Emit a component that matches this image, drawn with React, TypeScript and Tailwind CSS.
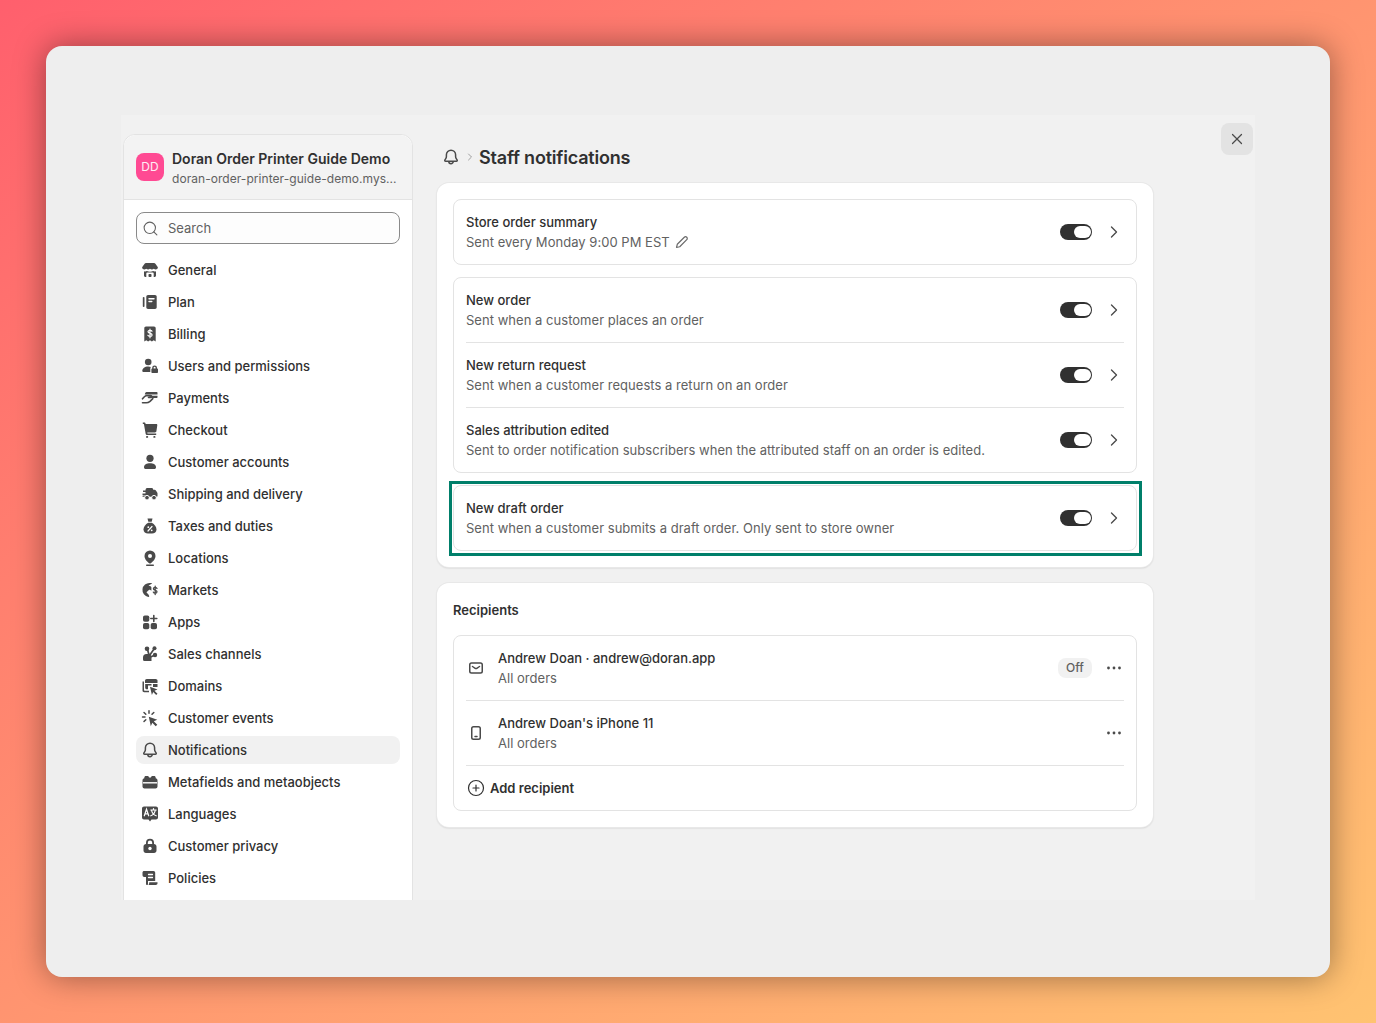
import { ChevronRight, CirclePlus, Search, X } from 'lucide-react'
import type { ReactNode } from 'react'

const Icon = ({ children }: { children: ReactNode }) => (
  <svg viewBox="0 0 20 20" fill="#4a4a4a" className="w-5 h-5 shrink-0">
    {children}
  </svg>
)

const BellIcon = () => (
  <Icon>
    <path
      d="M10 3.200a4.600 4.600 0 0 0-4.600 4.600v1.600c0 .9-.3 1.800-.8 2.500l-.7 1c-.4.600 0 1.300.7 1.300h10.800c.7 0 1.100-.7.7-1.300l-.7-1c-.5-.7-.8-1.600-.8-2.500V7.800A4.600 4.600 0 0 0 10 3.200Z"
      fill="none"
      stroke="#4a4a4a"
      strokeWidth="1.500"
      strokeLinejoin="round"
    />
    <path d="M7.800 14.500a2.200 2.200 0 0 0 4.400 0" fill="none" stroke="#4a4a4a" strokeWidth="1.500" />
  </Icon>
)

const navIcons: Record<string, ReactNode> = {
  General: (
    <Icon>
      <path d="M6 3h8c.6 0 1.100.3 1.400.7l2.300 3.200c.3.500.3 1.100-.1 1.500a2.800 2.800 0 0 1-3.800.3 3 3 0 0 1-3.800 0 3 3 0 0 1-3.800 0 2.800 2.800 0 0 1-3.800-.3c-.4-.4-.4-1-.1-1.500l2.300-3.200C4.900 3.300 5.400 3 6 3Z" />
      <path d="M4 11.200c1 .4 2 .3 2.900-.2 1.900 1 4.300 1 6.200 0 .9.500 1.900.6 2.900.2v4.300c0 .9-.7 1.500-1.500 1.500h-.8v-3.500a1 1 0 0 0-1-1H7.300a1 1 0 0 0-1 1V17h-.8C4.700 17 4 16.400 4 15.500Z" />
      <rect x="8.500" y="14" width="3" height="3" rx=".8" />
    </Icon>
  ),
  Plan: (
    <Icon>
      <rect x="2.800" y="5" width="1.700" height="10" rx=".8" />
      <path d="M8 3h7c1 0 1.700.8 1.700 1.700v10.600c0 1-.7 1.700-1.700 1.700H8c-1 0-1.700-.7-1.700-1.700V4.700C6.300 3.800 7 3 8 3Z" />
      <path d="M9 6.700h5M9 9.500h2.800" stroke="#fff" strokeWidth="1.400" strokeLinecap="round" />
    </Icon>
  ),
  Billing: (
    <Icon>
      <path d="M6 2.500h8c1 0 1.700.8 1.700 1.700v13.300l-2-1.300-1.800 1.300-1.900-1.300-1.900 1.300-1.800-1.300-2 1.300V4.200c0-.9.700-1.700 1.700-1.700Z" />
      <path d="M12 7.300c-.3-.7-1-1-2-1-1.100 0-2 .5-2 1.500 0 2.200 4.100 1 4.100 3.100 0 1-.9 1.500-2.100 1.500-1 0-1.800-.4-2.100-1.100M10 5v8.800" fill="none" stroke="#fff" strokeWidth="1.200" strokeLinecap="round" />
    </Icon>
  ),
  'Users and permissions': (
    <Icon>
      <circle cx="8.200" cy="6" r="3.300" />
      <path d="M2.300 15c0-2.800 2.500-4.600 5.900-4.600 1 0 1.900.2 2.700.5a3 3 0 0 0-.6 1.800v3.300H3.800c-.8 0-1.500-.3-1.500-1Z" />
      <path d="M12.200 12.500v-.7a2.400 2.400 0 0 1 4.800 0v.7h.2c.5 0 .8.400.8.800v3c0 .4-.3.700-.8.700h-5c-.5 0-.8-.3-.8-.7v-3c0-.4.300-.8.800-.8Zm1.400 0h2v-.7a1 1 0 0 0-2 0Z" fillRule="evenodd" />
    </Icon>
  ),
  Payments: (
    <Icon>
      <path d="M6.500 4h10.300c.5 0 .7.300.7.700V6.500H4.800c.2-1.500.8-2.500 1.700-2.500ZM8 7.800h9.500v1.400c0 .5-.2.800-.7.800h-4.300Z" />
      <path d="M2.500 10.800c1-1.300 2.300-2.800 3.800-3.200h4.500c1 0 1.200 1.700 0 1.900H8.500M2.500 14.800h3.700c1.500 0 2.800-.6 3.800-1.500l2.800-2.700" fill="none" stroke="#4a4a4a" strokeWidth="1.600" strokeLinecap="round" strokeLinejoin="round" />
    </Icon>
  ),
  Checkout: (
    <Icon>
      <path d="M2.800 2.500h1.500c.6 0 1.100.4 1.200 1l.1.500h10.700c.6 0 1.100.6 1 1.200l-.9 6.100c-.1.700-.7 1.200-1.400 1.200H7.300l.2 1h8.700v1.400H6.900c-.6 0-1-.4-1.200-1L3.900 4H2.800Z" />
      <rect x="6" y="16" width="2.200" height="1.800" rx=".9" />
      <rect x="13.300" y="16" width="2.200" height="1.800" rx=".9" />
    </Icon>
  ),
  'Customer accounts': (
    <Icon>
      <circle cx="10" cy="6.300" r="3.600" />
      <path d="M4 15.200c0-2.700 2.700-4 6-4s6 1.300 6 4c0 1-.7 1.800-1.700 1.800H5.700C4.700 17 4 16.200 4 15.200Z" />
    </Icon>
  ),
  'Shipping and delivery': (
    <Icon>
      <path d="M7 4h4.500c1 0 1.700.7 1.700 1.700h1.400c.5 0 1 .3 1.300.7l1.300 2.200c.2.300.3.600.3 1V12c0 .5-.3.800-.8.800H5.500V11H2.500V9.500h3V8H3V6.500h2.500C5.500 5 6 4 7 4Z" />
      <rect x="2.500" y="11.500" width="3.500" height="1.300" rx=".6" />
      <circle cx="7" cy="13.700" r="2.300" stroke="#fff" strokeWidth="1" />
      <circle cx="14" cy="13.700" r="2.300" stroke="#fff" strokeWidth="1" />
    </Icon>
  ),
  'Taxes and duties': (
    <Icon>
      <path d="M7.500 2.500h5l-.8 3.200H8.300Z" />
      <path d="M8.200 6.700h3.600c2.700 1.500 4.700 4 4.700 6.800 0 2.500-2 4-4.500 4h-4c-2.500 0-4.500-1.500-4.500-4 0-2.800 2-5.300 4.700-6.800Z" />
      <path d="M12 10.500 8 15" stroke="#fff" strokeWidth="1.200" strokeLinecap="round" />
      <circle cx="8.300" cy="11.200" r=".9" fill="#fff" />
      <circle cx="11.700" cy="14.300" r=".9" fill="#fff" />
    </Icon>
  ),
  Locations: (
    <Icon>
      <path d="M10 2.500a5.500 5.500 0 0 0-5.500 5.500c0 3.300 3.100 6 4.700 7.200.5.300 1.100.3 1.600 0 1.600-1.200 4.700-3.900 4.700-7.200A5.500 5.500 0 0 0 10 2.500Z" />
      <circle cx="10" cy="8" r="2" fill="#fff" />
      <rect x="6" y="16.500" width="8" height="1.400" rx=".7" />
    </Icon>
  ),
  Markets: (
    <Icon>
      <path d="M10 3a7 7 0 0 0-1.600 13.900c.8.100 1-.6.700-1.200l-.8-1.500-1.300-1.100c-.5-.4-.5-1 0-1.400l1.900-1.600c.4-.4 1-.3 1.400-.1l1.100.7V7.500c0-.5-.4-1-.9-1.200L8.500 5.500l3.700-2.100C11.500 3.100 10.800 3 10 3Z" />
      <path d="M17 8.500c-.3-.8-1-1.200-1.800-1.200-1 0-1.800.5-1.800 1.500 0 2 3.600 1 3.600 3 0 1-.8 1.500-1.800 1.500-.9 0-1.600-.4-1.900-1.200M15.200 6.200v8.400" fill="none" stroke="#4a4a4a" strokeWidth="1.300" strokeLinecap="round" />
    </Icon>
  ),
  Apps: (
    <Icon>
      <rect x="3" y="3.500" width="6.300" height="6.300" rx="1.800" />
      <rect x="3" y="11" width="6.300" height="6.300" rx="1.800" />
      <rect x="10.700" y="11" width="6.300" height="6.300" rx="1.800" />
      <path d="M13.800 3.500v6M10.800 6.500h6" stroke="#4a4a4a" strokeWidth="1.600" strokeLinecap="round" />
    </Icon>
  ),
  'Sales channels': (
    <Icon>
      <circle cx="7" cy="4.700" r="2.300" />
      <circle cx="14.500" cy="4.200" r="2" />
      <path d="M3 13.500A3.500 3.500 0 0 1 6.500 10h1.500a3.500 3.500 0 0 1 3.500 3.500V17H4.500A1.500 1.500 0 0 1 3 15.500Z" />
      <circle cx="15" cy="11" r="2.200" />
      <path d="M7.500 5.500 9 11M14 5l-4.500 6.500M15 11l-4.500 2" stroke="#4a4a4a" strokeWidth="1.700" fill="none" />
    </Icon>
  ),
  Domains: (
    <Icon>
      <path d="M2.500 5.500v9c0 1 .7 1.700 1.700 1.700H9v-1.500H5c-.6 0-1-.4-1-1V5.500Z" />
      <path d="M6.700 3h9c1 0 1.800.8 1.800 1.800V7H5V4.700C5 3.800 5.800 3 6.700 3Z" />
      <path d="M5.200 8h6.300v1.500H8v3.700H6.700c-.9 0-1.500-.6-1.500-1.500ZM13 8h4.500v3H13Z" />
      <path d="m10 10.800 7.500 2.600-3 1.300 3 3-1.300 1.300-3-3-1.300 3Z" />
    </Icon>
  ),
  'Customer events': (
    <Icon>
      <path d="m8.800 8.800 8.500 3-3.500 1.500 3.500 3.500-1.600 1.500-3.400-3.500-1.500 3.500Z" />
      <path d="M9 2.800v2.400M4 4.500l1.800 1.800M2.500 9H5M4 13.500l1.800-1.800M13.800 4.500 12 6.300" stroke="#4a4a4a" strokeWidth="1.500" strokeLinecap="round" />
    </Icon>
  ),
  Notifications: <BellIcon />,
  'Metafields and metaobjects': (
    <Icon>
      <path d="M6 4h1.500c.8 0 1.500.7 1.500 1.500h2C11 4.700 11.700 4 12.500 4H14c1 0 1.700.7 1.700 1.700v.5c1 .2 1.800 1 1.800 2v6.300c0 1.200-1 2-2 2h-11c-1 0-2-.8-2-2V8.200c0-1 .8-1.800 1.800-2v-.5C4.300 4.700 5 4 6 4Z" />
      <path d="M3 10.800h14" stroke="#fff" strokeWidth="1.400" />
    </Icon>
  ),
  Languages: (
    <Icon>
      <path d="M4 2.500h12c1.100 0 2 .9 2 2v9c0 1.100-.9 2-2 2h-4.500L10 17.500l-1.500-2H4c-1.100 0-2-.9-2-2v-9c0-1.100.9-2 2-2Z" />
      <path d="m4.300 11.800 2.200-6.600 2.200 6.600M5 9.800h3M10.800 6h5.400M13.500 4.500V6M15.300 6c-.4 2.700-2.300 5-4.500 5.800M11.500 6c.4 2.700 2.300 5 4.700 5.800" fill="none" stroke="#fff" strokeWidth="1.200" strokeLinecap="round" />
    </Icon>
  ),
  'Customer privacy': (
    <Icon>
      <path d="M6 8V6.700a4 4 0 0 1 8 0V8c1.400.1 2.500 1.200 2.500 2.500v4c0 1.500-1 2.500-2.500 2.500H6c-1.500 0-2.500-1-2.500-2.500v-4C3.500 9.200 4.600 8.100 6 8Zm1.800 0h4.400V6.700a2.200 2.200 0 0 0-4.400 0Z" fillRule="evenodd" />
      <circle cx="10" cy="12.500" r="1.700" fill="#fff" />
    </Icon>
  ),
  Policies: (
    <Icon>
      <path d="M4 3h9.500c1 0 1.700.8 1.700 1.700V13H8v3c0 .5-.3 1-.8 1-.8 0-1.200-.6-1.200-1.300V9H4.300C3.100 9 2.500 8.300 2.500 7V4.500C2.500 3.700 3.200 3 4 3Z" />
      <path d="M8.500 6.500h4M8.500 9.500h4" stroke="#fff" strokeWidth="1.300" strokeLinecap="round" />
      <path d="M9.300 14.300h8.200v1c0 1-.7 1.700-1.700 1.700H8.500c.5-.7.800-1.600.8-2.700Z" />
    </Icon>
  ),
}

const navItems = [
  'General',
  'Plan',
  'Billing',
  'Users and permissions',
  'Payments',
  'Checkout',
  'Customer accounts',
  'Shipping and delivery',
  'Taxes and duties',
  'Locations',
  'Markets',
  'Apps',
  'Sales channels',
  'Domains',
  'Customer events',
  'Notifications',
  'Metafields and metaobjects',
  'Languages',
  'Customer privacy',
  'Policies',
]

const Toggle = () => (
  <div className="w-8 h-4 rounded-full bg-[#303030] flex items-center justify-end pr-px shrink-0">
    <div className="w-[17px] h-3 rounded-full bg-white" />
  </div>
)

const EditIcon = () => (
  <svg viewBox="0 0 16 16" fill="none" stroke="#6b6b6b" strokeWidth="1.300" className="w-[15px] h-[15px] shrink-0">
    <path
      d="M11 2.400a1.800 1.800 0 0 1 2.600 2.600l-7.500 7.500-3.400.8.800-3.400Z"
      strokeLinejoin="round"
    />
  </svg>
)

const NotificationRow = ({ title, subtitle, edit }: { title: string; subtitle: string; edit?: boolean }) => (
  <div className="h-16 flex items-center pl-3 pr-3">
    <div className="flex-1">
      <div className="text-[13px] leading-5 font-[450] text-[#303030]">{title}</div>
      <div className="text-[13px] leading-5 tracking-[0.03px] text-[#616161] flex items-center gap-1">
        {subtitle}
        {edit && <EditIcon />}
      </div>
    </div>
    <Toggle />
    <ChevronRight className="w-5 h-5 ml-3 text-[#4a4a4a]" strokeWidth={1.6} />
  </div>
)

const Divider = () => <div className="h-px mx-3 bg-[#e3e3e3]" />

const Dots = () => (
  <svg viewBox="0 0 20 20" fill="#4a4a4a" className="w-5 h-5 shrink-0">
    <circle cx="4.500" cy="10" r="1.400" />
    <circle cx="10" cy="10" r="1.400" />
    <circle cx="15.500" cy="10" r="1.400" />
  </svg>
)

const RecipientRow = ({ icon, title, off }: { icon: ReactNode; title: string; off?: boolean }) => (
  <div className="h-16 flex items-center px-3">
    <div className="w-5 h-5 mr-3 shrink-0">{icon}</div>
    <div className="flex-1">
      <div className="text-[13px] leading-5 font-[450] text-[#303030]">{title}</div>
      <div className="text-[13px] leading-5 tracking-[0.03px] text-[#616161]">All orders</div>
    </div>
    {off && (
      <span className="h-5 w-[34px] mr-3 rounded-lg bg-[#f1f1f1] text-xs font-medium text-[#616161] flex items-center justify-center">
        Off
      </span>
    )}
    <Dots />
  </div>
)

const App = () => {
  return (
    <div className="w-[1376px] h-[1023px] p-[46px] bg-linear-to-br from-[#ff5f6d] to-[#ffc371] overflow-hidden font-['Inter',sans-serif]">
      <div className="h-[931px] rounded-2xl bg-[#eeeeee] shadow-[0_0_32px_rgba(0,0,0,0.4)] pt-[69px] pl-[75px]">
        <div className="w-[1134px] h-[785px] bg-[#f1f1f1] overflow-hidden flex items-start pl-[2px] pt-2">
          {/* Sidebar */}
          <aside className="w-[290px] mt-[11px] shrink-0 rounded-t-xl border border-[#e3e3e3] bg-white">
            <div className="h-[65px] flex items-center gap-2 px-3 bg-[#f3f3f3] border-b border-[#e3e3e3] rounded-t-xl">
              <div className="w-7 h-7 rounded-lg bg-[#ff4a93] text-white/90 text-xs flex items-center justify-center shrink-0">
                DD
              </div>
              <div className="min-w-0 pt-[3px]">
                <div className="text-sm leading-5 font-semibold text-[#303030] whitespace-nowrap">
                  Doran Order Printer Guide Demo
                </div>
                <div className="text-xs leading-5 tracking-[0.05px] text-[#616161] whitespace-nowrap">
                  doran-order-printer-guide-demo.mys...
                </div>
              </div>
            </div>
            <div className="px-3 pt-3 pb-4">
              <div className="h-8 rounded-lg border border-[#8a8a8a] bg-[#fdfdfd] flex items-center gap-2 pl-[5px]">
                <Search className="w-[17px] h-[17px] text-[#616161]" strokeWidth={1.5} />
                <span className="text-[13px] text-[#616161] ml-px pt-[2px]">Search</span>
              </div>
              <nav className="mt-3 flex flex-col gap-1">
                {navItems.map((name) => (
                  <div
                    key={name}
                    className={`h-7 rounded-lg flex items-center gap-2 pl-1 text-[13px] font-[540] text-[#303030] ${
                      name === 'Notifications' ? 'bg-[#f1f1f1]' : ''
                    }`}
                  >
                    {navIcons[name]}
                    <span className="pt-[2px]">{name}</span>
                  </div>
                ))}
              </nav>
            </div>
          </aside>

          {/* Main */}
          <main className="w-[716px] ml-6 mt-[22px] shrink-0">
            <div className="h-6 flex items-center pl-[4px] mb-[14px]">
              <BellIcon />
              <ChevronRight className="w-3 h-3 mx-[3px] text-[#8a8a8a]" strokeWidth={1.6} />
              <h1 className="text-lg font-semibold tracking-[-0.2px] text-[#303030] pt-px">Staff notifications</h1>
            </div>

            <section className="rounded-xl bg-white p-4 shadow-[0_0_0_1px_#e8e8e8,0_1px_2px_rgba(0,0,0,0.2)]">
              <div className="rounded-lg border border-[#e3e3e3]">
                <NotificationRow title="Store order summary" subtitle="Sent every Monday 9:00 PM EST" edit />
              </div>
              <div className="mt-3 rounded-lg border border-[#e3e3e3]">
                <NotificationRow title="New order" subtitle="Sent when a customer places an order" />
                <Divider />
                <NotificationRow title="New return request" subtitle="Sent when a customer requests a return on an order" />
                <Divider />
                <NotificationRow
                  title="Sales attribution edited"
                  subtitle="Sent to order notification subscribers when the attributed staff on an order is edited."
                />
              </div>
              <div className="relative mt-3 rounded-lg border border-[#e3e3e3]">
                <NotificationRow
                  title="New draft order"
                  subtitle="Sent when a customer submits a draft order. Only sent to store owner"
                />
                <div className="absolute -left-[5px] -right-[6px] -top-[5px] -bottom-[6px] border-[3px] border-[#007f6a]" />
              </div>
            </section>

            <section className="mt-4 rounded-xl bg-white p-4 shadow-[0_0_0_1px_#e8e8e8,0_1px_2px_rgba(0,0,0,0.2)]">
              <h2 className="text-[13px] leading-5 font-semibold text-[#303030] pt-px -mb-px">Recipients</h2>
              <div className="mt-4 rounded-lg border border-[#e3e3e3]">
                <RecipientRow
                  title="Andrew Doan · andrew@doran.app"
                  off
                  icon={
                    <svg viewBox="0 0 20 20" fill="none" stroke="#4a4a4a" strokeWidth="1.500" className="w-5 h-5">
                      <rect x="3.750" y="5" width="12.500" height="10" rx="1.750" />
                      <path d="m6.500 8.500 2.700 1.800c.5.300 1.100.300 1.600 0l2.700-1.800" strokeLinecap="round" />
                    </svg>
                  }
                />
                <Divider />
                <RecipientRow
                  title="Andrew Doan's iPhone 11"
                  icon={
                    <svg viewBox="0 0 20 20" fill="none" stroke="#4a4a4a" strokeWidth="1.500" className="w-5 h-5">
                      <rect x="5.750" y="3.750" width="8.500" height="12.500" rx="1.750" />
                      <path d="M9 13.500h2" strokeLinecap="round" />
                    </svg>
                  }
                />
                <Divider />
                <div className="h-11 flex items-center gap-1 px-3">
                  <CirclePlus className="w-5 h-5 text-[#303030] p-[1px]" strokeWidth={1.6} />
                  <span className="text-[13px] font-semibold text-[#303030] pt-[2px]">Add recipient</span>
                </div>
              </div>
            </section>
          </main>

          <button className="ml-[68px] w-8 h-8 rounded-lg bg-[#e3e3e3] flex items-center justify-center shrink-0">
            <X className="w-[18px] h-[18px] text-[#4a4a4a]" strokeWidth={1.6} />
          </button>
        </div>
      </div>
    </div>
  )
}

export default App
